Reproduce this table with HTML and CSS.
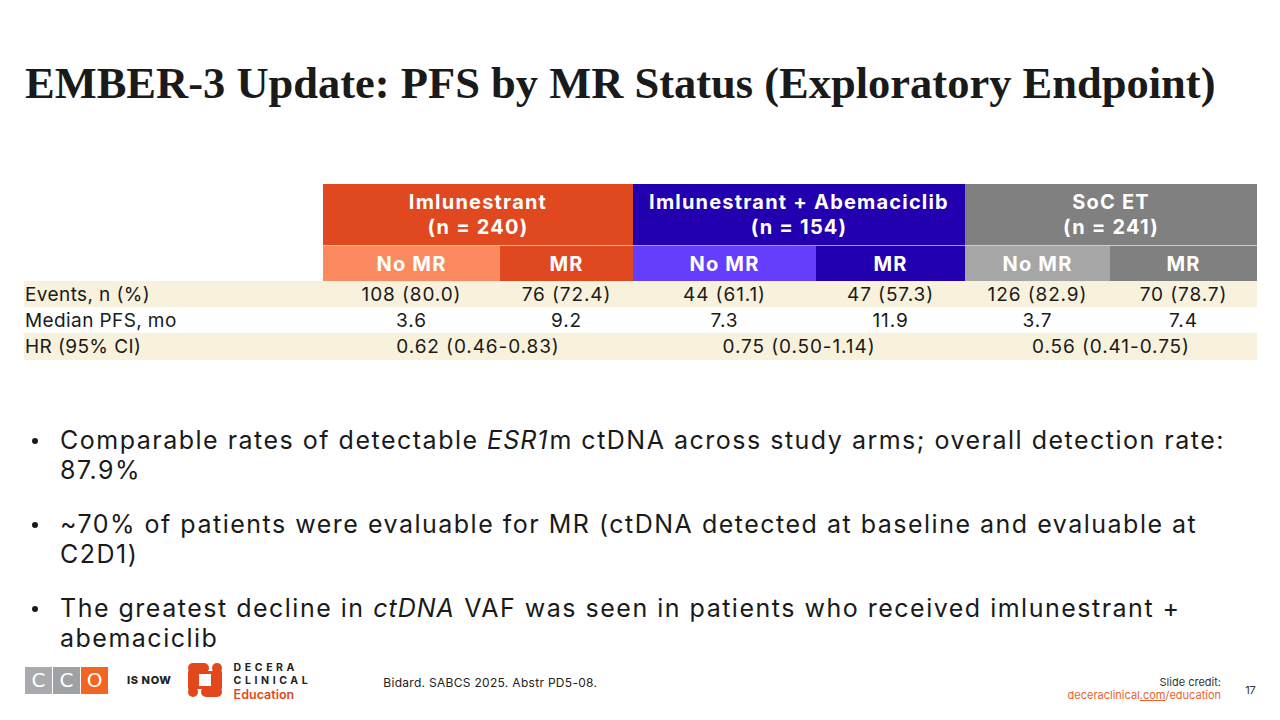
FILE: index.html
```html
<!DOCTYPE html>
<html>
<head>
<meta charset="utf-8">
<link rel="stylesheet" href="styles.css">
</head>
<body>
<div class="slide">
  <h1 class="title">EMBER-3 Update: PFS by MR Status (Exploratory Endpoint)</h1>

  <div class="table">
    <div class="cell blank h1"></div>
    <div class="cell h1 org span2">Imlunestrant<br>(n = 240)</div>
    <div class="cell h1 blu span2">Imlunestrant + Abemaciclib<br>(n = 154)</div>
    <div class="cell h1 gry span2">SoC ET<br>(n = 241)</div>

    <div class="cell blank h2"></div>
    <div class="cell h2 org-l">No MR</div>
    <div class="cell h2 org">MR</div>
    <div class="cell h2 blu-l">No MR</div>
    <div class="cell h2 blu">MR</div>
    <div class="cell h2 gry-l">No MR</div>
    <div class="cell h2 gry">MR</div>

    <div class="cell lab beige">Events, n (%)</div>
    <div class="cell val beige">108 (80.0)</div>
    <div class="cell val beige">76 (72.4)</div>
    <div class="cell val beige">44 (61.1)</div>
    <div class="cell val beige">47 (57.3)</div>
    <div class="cell val beige">126 (82.9)</div>
    <div class="cell val beige">70 (78.7)</div>

    <div class="cell lab">Median PFS, mo</div>
    <div class="cell val">3.6</div>
    <div class="cell val">9.2</div>
    <div class="cell val">7.3</div>
    <div class="cell val">11.9</div>
    <div class="cell val">3.7</div>
    <div class="cell val">7.4</div>

    <div class="cell lab beige last">HR (95% CI)</div>
    <div class="cell val beige last span2">0.62 (0.46-0.83)</div>
    <div class="cell val beige last span2">0.75 (0.50-1.14)</div>
    <div class="cell val beige last span2">0.56 (0.41-0.75)</div>
  </div>

  <ul class="bullets">
    <li>Comparable rates of detectable <i>ESR1</i>m ctDNA across study arms; overall detection rate:<br>87.9%</li>
    <li>~70% of patients were evaluable for MR (ctDNA detected at baseline and evaluable at C2D1)</li>
    <li>The greatest decline in <i>ctDNA</i> VAF was seen in patients who received imlunestrant +<br>abemaciclib</li>
  </ul>

  <div class="footer">
    <div class="cco">
      <span class="sq">C</span><span class="sq sq2">C</span><span class="sq sq3">O</span>
    </div>
    <span class="isnow">IS NOW</span>
    <div class="decera">
      <svg class="dlogo" width="34" height="34" viewBox="0 0 34 34">
        <g fill="#e2481c">
          <rect x="0" y="0" width="21" height="10" rx="5"/>
          <circle cx="29" cy="5" r="5"/>
          <rect x="0" y="7" width="10" height="20" rx="2"/>
          <rect x="24" y="7" width="10" height="20" rx="2"/>
          <circle cx="5" cy="29" r="5"/>
          <rect x="13" y="24" width="21" height="10" rx="5"/>
          <rect x="8" y="8" width="18" height="18"/>
        </g>
        <rect x="11" y="11" width="12" height="12" fill="#fff"/>
      </svg>
      <div class="dtext">
        <span class="dt1">DECERA</span>
        <span class="dt1">CLINICAL</span>
        <span class="dt2">Education</span>
      </div>
    </div>
    <div class="ref">Bidard. SABCS 2025. Abstr PD5-08.</div>
    <div class="credit">
      <span>Slide credit:</span>
      <span class="link">deceraclinical<u>.com</u>/education</span>
    </div>
    <div class="pnum">17</div>
  </div>
</div>
</body>
</html>
```

FILE: styles.css
```css
* { box-sizing: border-box; }
html, body { margin: 0; padding: 0; background: #fff; }
.slide {
  width: 1280px;
  height: 720px;
  overflow: hidden;
  position: relative;
  display: flex;
  flex-direction: column;
  font-family: "Inter", "DejaVu Sans", sans-serif;
  color: #1a1a1a;
}
.title {
  margin: 58px 0 0 25px;
  font-family: "Liberation Serif", serif;
  font-weight: bold;
  font-size: 44.5px;
  line-height: 50px;
  color: #1a1a1a;
}
.table {
  margin: 76px 0 0 24px;
  display: grid;
  grid-template-columns: 299px 177px 133px 183px 149px 145px 147px;
  grid-template-rows: 62px 35px 26px 26px 27px;
  width: 1233px;
}
.cell {
  display: flex;
  align-items: center;
  justify-content: center;
  text-align: center;
}
.span2 { grid-column: span 2; }
.h1 {
  color: #fff;
  font-weight: 700;
  font-size: 20px;
  letter-spacing: 1.2px;
  line-height: 25px;
  border-bottom: 1px solid rgba(255,255,255,0.6);
}
.h1.blank, .h2.blank { border: none; background: #fff; }
.h2 {
  color: #fff;
  font-weight: 700;
  font-size: 20px;
  letter-spacing: 1.2px;
}
.org { background: #e0481f; }
.org-l { background: #fb8a60; }
.blu { background: #2200b0; }
.blu-l { background: #653efc; }
.gry { background: #808080; }
.gry-l { background: #a6a6a6; }
.beige { background: #f8f1dc; }
.lab {
  justify-content: flex-start;
  font-size: 19px;
  letter-spacing: 0.4px;
  padding-left: 1px;
}
.val { font-size: 19px; letter-spacing: 0.9px; }

.bullets {
  list-style: none;
  margin: 65px 0 0 0;
  padding: 0 40px 0 32px;
}
.bullets li {
  position: relative;
  padding-left: 28px;
  font-size: 25px;
  letter-spacing: 1.5px;
  line-height: 30px;
  margin-bottom: 24px;
  color: #1a1a1a;
}
.bullets li i { letter-spacing: 1px; padding-right: 1px; }
.bullets li::before {
  content: "";
  position: absolute;
  left: 0;
  top: 13px;
  width: 6px;
  height: 6px;
  border-radius: 50%;
  background: #1a1a1a;
}

.footer {
  position: absolute;
  left: 0;
  right: 0;
  bottom: 0;
  height: 80px;
  display: flex;
  align-items: center;
  padding-left: 25px;
}
.cco { display: flex; gap: 1px; }
.sq {
  width: 27px;
  height: 27px;
  background: #a8aaad;
  color: #fff;
  display: flex;
  align-items: center;
  justify-content: center;
  font-family: "DejaVu Sans", sans-serif;
  font-size: 20px;
  font-weight: 400;
}
.sq2 { background: #9fa2a5; }
.sq3 { background: #f26522; }
.isnow {
  margin-left: 19px;
  font-size: 11px;
  font-weight: 800;
  color: #222;
  letter-spacing: 0.6px;
}
.decera {
  margin-left: 16px;
  display: flex;
  align-items: center;
  gap: 12px;
}
.dtext { display: flex; flex-direction: column; margin-top: 2px; }
.dt1 { font-size: 10.5px; line-height: 13px; font-weight: 700; letter-spacing: 3.6px; color: #222; }
.dt2 { font-size: 12.5px; font-weight: 600; color: #e2481c; line-height: 15px; }
.ref {
  margin-left: 72px;
  font-size: 12px;
  letter-spacing: 0.3px;
  color: #222;
  margin-top: 4px;
}
.credit {
  margin-left: auto;
  display: flex;
  flex-direction: column;
  align-items: flex-end;
  font-size: 11px;
  line-height: 13px;
  color: #333;
  margin-top: 18px;
}
.credit .link { color: #e8622d; }
.credit u { text-decoration: underline; }
.pnum {
  width: 59px;
  text-align: center;
  font-size: 11px;
  color: #333;
  margin-top: 20px;
}
```
